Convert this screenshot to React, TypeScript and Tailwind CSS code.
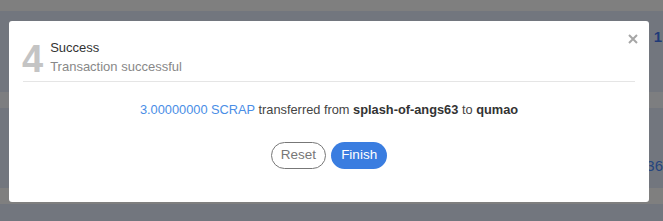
export default function App() {
  return (
    <div
      className="relative w-[663px] h-[221px] overflow-hidden bg-[#72767e]"
      style={{ fontFamily: '"Liberation Sans", Arial, sans-serif' }}
    >
      {/* page behind the overlay */}
      <div className="flex flex-col">
        <div className="h-[11px] bg-[#7f7f7f]" />
        <div className="h-[81px] bg-[#72767e] flex justify-end pr-[1px] pt-[18px]">
          <span className="text-[15px] font-bold text-[#1f3a78] leading-none">1</span>
        </div>
        <div className="h-[16px] bg-[#7d7e80]" />
        <div className="h-[80px] bg-[#72767e] flex justify-end pt-[50px]">
          <span className="text-[15px] text-[#25457f] leading-none">36</span>
        </div>
        <div className="h-[16px] bg-[#7f7f7f]" />
      </div>

      {/* modal */}
      <div className="absolute left-[9px] top-[21px] w-[640px] h-[181px] bg-white rounded-[3px] px-[14px] flex flex-col">
        <button className="absolute right-[11px] top-[13px] w-[10px] h-[10px]" type="button">
          <svg viewBox="0 0 10 10" className="w-[10px] h-[10px]">
            <path d="M1 1L9 9M9 1L1 9" stroke="#a6a6a6" strokeWidth="2" />
          </svg>
        </button>
        <div className="flex items-start h-[60px]">
          <div className="mt-[19px] ml-[-1px] text-[38px] leading-none font-bold text-[#c4c4c4]">4</div>
          <div className="mt-[17px] ml-[7px] text-[13px] leading-[19px]">
            <div className="text-[#333]">Success</div>
            <div className="text-[#888]">Transaction successful</div>
          </div>
        </div>
        <div className="h-px bg-[#e5e5e5]" />
        <p className="mt-[18px] text-center text-[12.8px] leading-[19px] text-[#444]">
          <span className="text-[#4a8ee6]">3.00000000 SCRAP</span> transferred from{" "}
          <span className="font-bold text-[#333]">splash-of-angs63</span> to{" "}
          <span className="font-bold text-[#333]">qumao</span>
        </p>
        <div className="mt-[23px] flex justify-center gap-[5px]">
          <button
            type="button"
            className="h-[27px] px-[9px] rounded-full border border-[#777] text-[#777] text-[13.5px] bg-white"
          >
            Reset
          </button>
          <button
            type="button"
            className="h-[27px] px-[10px] rounded-full bg-[#3a7de0] text-white text-[13.5px]"
          >
            Finish
          </button>
        </div>
      </div>
    </div>
  );
}
